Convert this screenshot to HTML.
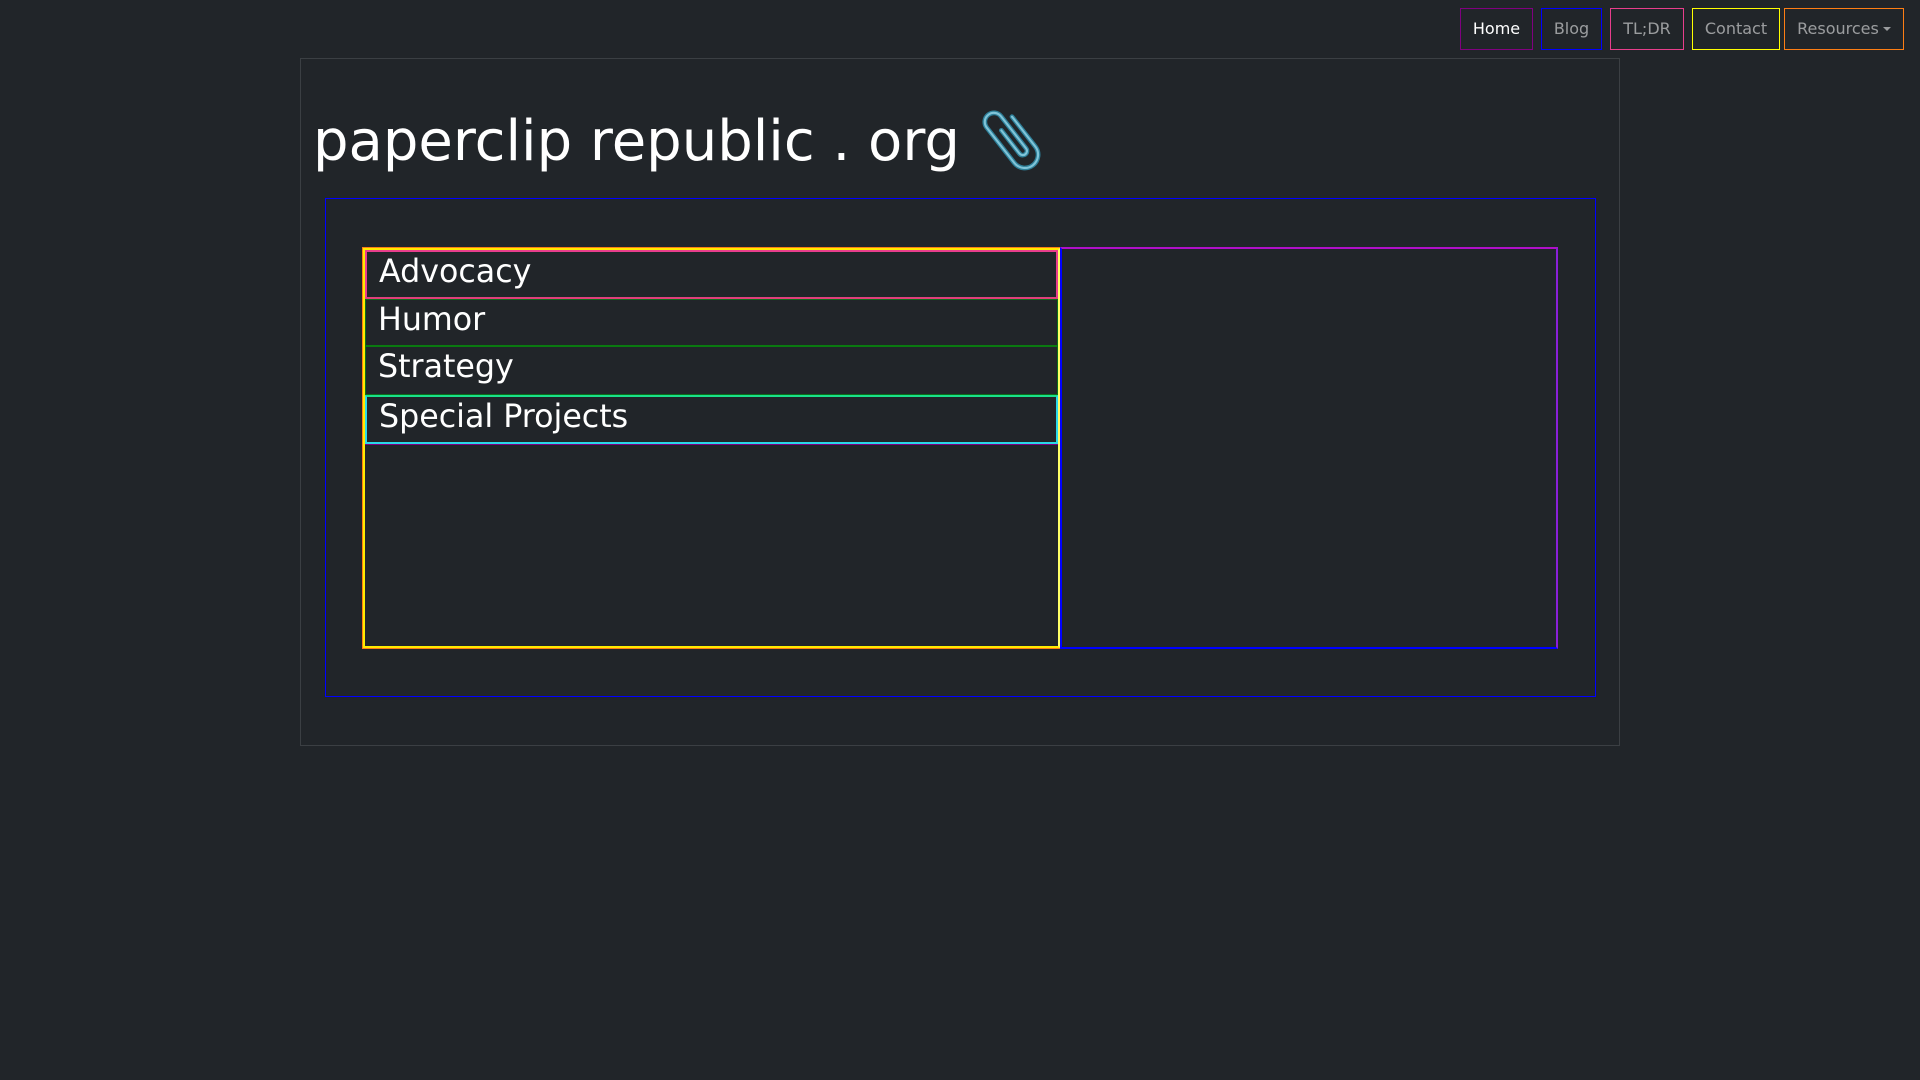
<!DOCTYPE html>
<html><head><meta charset="utf-8"><style>
*{box-sizing:border-box;margin:0;padding:0}
body{width:1920px;height:1080px;background:#212529;font-family:"DejaVu Sans","Liberation Sans",sans-serif;position:relative;overflow:hidden;color:#fff}
.a{position:absolute}
.nav{top:8px;height:42px;border:1px solid;font-size:16px;line-height:40px;text-align:center;color:rgba(255,255,255,.55)}
.item{position:absolute;left:365px;width:693px;height:48px;font-size:31.7px;line-height:40px;padding-left:12px;color:#fff}
</style></head><body>
<div class="a nav" style="left:1460px;width:73px;border-color:#800080;color:#fff">Home</div>
<div class="a nav" style="left:1541px;width:61px;border-color:#0000ff">Blog</div>
<div class="a nav" style="left:1610px;width:74px;border-color:#e83e8c">TL;DR</div>
<div class="a nav" style="left:1692px;width:88px;border-color:#ffff00">Contact</div>
<div class="a nav" style="left:1784px;width:120px;border-color:#fd7e14">Resources<span style="display:inline-block;width:0;height:0;border-left:4px solid transparent;border-right:4px solid transparent;border-top:4px solid rgba(255,255,255,.55);vertical-align:3px;margin-left:4px"></span></div>

<div class="a" style="left:300px;top:58px;width:1320px;height:688px;border:1px solid #3b3f43"></div>
<div class="a" style="left:313px;top:104px;font-size:56px;line-height:76px;white-space:nowrap">paperclip republic . org</div>
<svg class="a" style="left:966px;top:92px" width="98" height="98" viewBox="0 0 70 70">
<g transform="rotate(-38 35 35)" fill="none" stroke-linecap="round">
<path d="M44 20 V47 a9.5 9.5 0 0 1 -19 0 V15 a6.5 6.5 0 0 1 13 0 V44 a3 3 0 0 1 -6 0 V23" stroke="#2e7f98" stroke-width="3.4"/>
<path d="M44 20 V47 a9.5 9.5 0 0 1 -19 0 V15 a6.5 6.5 0 0 1 13 0 V44 a3 3 0 0 1 -6 0 V23" stroke="#80c4d8" stroke-width="1.5"/>
</g></svg>

<div class="a" style="left:325px;top:198px;width:1271px;height:499px;border:1px solid #0000ff"></div>
<div class="a" style="left:362px;top:247px;width:1196px;height:402px;border:1px solid #fd7e14;border-right:0"></div>
<div class="a" style="left:363px;top:248px;width:697px;height:400px;border:2px solid #ffea00;border-right-color:#ffff66"></div>
<div class="a" style="left:1060px;top:247px;width:498px;height:402px;border:2px solid #0000ff;border-top-color:#b010c8;border-right-color:#8a20d8"></div>

<div class="item" style="top:250px;height:49px;border:2px solid #e83e8c;border-bottom-color:#e0407a">Advocacy</div>
<div class="item" style="top:299px;border:1px solid #0b6e1a;border-bottom:2px solid #0a7a10">Humor</div>
<div class="item" style="top:347px;border:1px solid #0b6e1a;border-top:0">Strategy</div>
<div class="item" style="top:395px;height:49px;border:2px solid #2ad8e8;border-top-color:#19e08a;box-shadow:0 1px 0 #800080">Special Projects</div>
</body></html>
